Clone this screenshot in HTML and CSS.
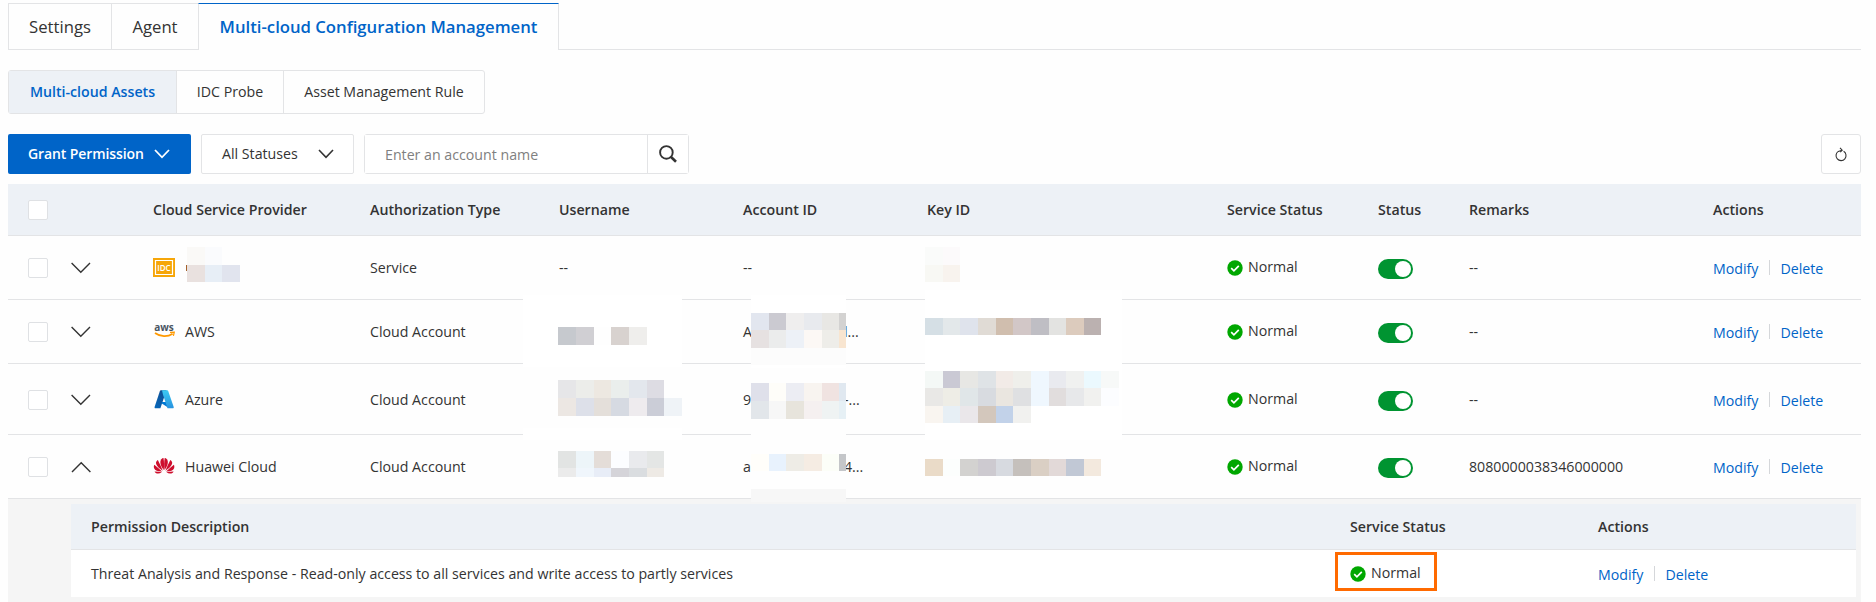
FILE: index.html
```html
<!DOCTYPE html>
<html lang="en">
<head>
    <meta charset="UTF-8">
    <title>Multi-cloud Configuration Management</title>
    <meta name="viewport" content="width=device-width, initial-scale=1">
    <link rel="stylesheet" href="styles.css">
</head>
<body>
<!-- shared icons -->
<svg class="sprite">
    <symbol id="chevron" viewBox="0 0 20 12"><path d="M.6 1l9.200 9.300L19 1" fill="none" stroke="currentColor" stroke-width="1.4"/></symbol>
    <symbol id="ok" viewBox="0 0 16 16"><circle cx="8" cy="8" r="7.7" fill="#00a700"/><path d="M4.2 8.2l2.7 2.6 4.9-4.9" fill="none" stroke="#fff" stroke-width="1.7"/></symbol>
</svg>
<div class="page">
    <div class="tabs">
        <a class="tab">Settings</a>
        <a class="tab">Agent</a>
        <a class="tab active">Multi-cloud Configuration Management</a>
        <span class="tabs-rest"></span>
    </div>

    <div class="segments">
        <a class="segment active">Multi-cloud Assets</a>
        <a class="segment">IDC Probe</a>
        <a class="segment">Asset Management Rule</a>
    </div>

    <div class="toolbar">
        <button class="btn-primary"><span>Grant Permission</span>
            <svg class="caret" viewBox="0 0 16 10"><path d="M1 1l7 7.300L15 1" fill="none" stroke="currentColor" stroke-width="1.8"/></svg>
        </button>
        <button class="select"><span>All Statuses</span>
            <svg class="caret" viewBox="0 0 16 10"><path d="M1 1l7 7.300L15 1" fill="none" stroke="currentColor" stroke-width="1.6"/></svg>
        </button>
        <div class="search">
            <input type="text" placeholder="Enter an account name">
            <button class="search-btn">
                <svg width="18" height="18" viewBox="0 0 18 18" fill="none" stroke="#333"><circle cx="7.4" cy="7.4" r="6.3" stroke-width="1.9"/><path d="M11.8 11.8l5.2 5" stroke-width="2.6"/></svg>
            </button>
        </div>
        <button class="refresh">
            <svg width="12" height="15" viewBox="0 0 12 15" fill="none" stroke="#333"><path d="M8.6 4.300A5 5 0 1 1 3.300 4.400L7 3.300" stroke-width="1.100"/><path d="M5 .8l2.200 2.400L5.200 5.200" stroke-width="1.100"/></svg>
        </button>
    </div>

    <div class="table-wrap">
        <table class="grid">
            <colgroup>
                <col class="c-check"><col class="c-arrow"><col class="c-provider"><col class="c-auth"><col class="c-user"><col class="c-account">
                <col class="c-key"><col class="c-service"><col class="c-status"><col class="c-remarks"><col class="c-actions">
            </colgroup>
            <thead>
                <tr>
                    <th><span class="check"></span></th>
                    <th></th>
                    <th>Cloud Service Provider</th>
                    <th>Authorization Type</th>
                    <th>Username</th>
                    <th>Account ID</th>
                    <th>Key ID</th>
                    <th>Service Status</th>
                    <th>Status</th>
                    <th>Remarks</th>
                    <th>Actions</th>
                </tr>
            </thead>
            <tbody>
                <tr>
                    <td><span class="check"></span></td>
                    <td><svg class="arrow"><use href="#chevron"/></svg></td>
                    <td><div class="provider">
                        <svg width="22" height="19" viewBox="0 0 22 19"><path d="M0 0h22v19H0z" fill="#f6a609"/><path d="M2.5 2.5h17v14h-17z" fill="none" stroke="#fff" stroke-width="1.2"/><text x="11" y="12.6" text-anchor="middle" class="idc">IDC</text></svg>
                    </div></td>
                    <td>Service</td>
                    <td>--</td>
                    <td>--</td>
                    <td></td>
                    <td><div class="state"><svg class="ok"><use href="#ok"/></svg>Normal</div></td>
                    <td><span class="switch"></span></td>
                    <td>--</td>
                    <td><div class="actions"><a>Modify</a><i></i><a>Delete</a></div></td>
                </tr>
                <tr>
                    <td><span class="check"></span></td>
                    <td><svg class="arrow"><use href="#chevron"/></svg></td>
                    <td><div class="provider">
                        <svg width="22" height="19" viewBox="0 0 22 19"><text x="11" y="9" text-anchor="middle" class="aws">aws</text><path d="M2 11c5.500 4 12.500 4.200 17.600.8" fill="none" stroke="#f90" stroke-width="1.700"/><path d="M17 10.300l4.300-.2-.9 3.700" fill="none" stroke="#f90" stroke-width="1.200"/></svg>
                        AWS
                    </div></td>
                    <td>Cloud Account</td>
                    <td></td>
                    <td><div class="account"><span>A</span>l...</div></td>
                    <td></td>
                    <td><div class="state"><svg class="ok"><use href="#ok"/></svg>Normal</div></td>
                    <td><span class="switch"></span></td>
                    <td>--</td>
                    <td><div class="actions"><a>Modify</a><i></i><a>Delete</a></div></td>
                </tr>
                <tr class="tall">
                    <td><span class="check"></span></td>
                    <td><svg class="arrow"><use href="#chevron"/></svg></td>
                    <td><div class="provider">
                        <svg width="22" height="19" viewBox="0 0 22 19">
                            <defs>
                                <linearGradient id="azDark" x1="1" y1="0" x2="0" y2="1"><stop offset="0" stop-color="#114a8b"/><stop offset="1" stop-color="#0669bc"/></linearGradient>
                                <linearGradient id="azLight" x1="0" y1="0" x2="0" y2="1"><stop offset="0" stop-color="#3ccbf4"/><stop offset="1" stop-color="#2892df"/></linearGradient>
                            </defs>
                            <path d="M7.800.3h5.700L7.400 18.300H2.600c-.9 0-1.200-.6-1-1.400L6.900 1c.2-.5.5-.7.9-.7z" fill="url(#azDark)"/>
                            <path d="M8.800 12h7v6l-7-4.500z" fill="#0078d4"/>
                            <path d="M9 .3h5.200c.5 0 .9.3 1 .7l5.500 15.900c.2.800-.2 1.400-1 1.400h-5.200L10 4.800z" fill="url(#azLight)"/>
                        </svg>
                        Azure
                    </div></td>
                    <td>Cloud Account</td>
                    <td></td>
                    <td><div class="account"><span>9</span>-...</div></td>
                    <td></td>
                    <td><div class="state"><svg class="ok"><use href="#ok"/></svg>Normal</div></td>
                    <td><span class="switch"></span></td>
                    <td>--</td>
                    <td><div class="actions"><a>Modify</a><i></i><a>Delete</a></div></td>
                </tr>
                <tr>
                    <td><span class="check"></span></td>
                    <td><svg class="arrow up"><use href="#chevron"/></svg></td>
                    <td><div class="provider">
                        <svg width="22" height="19" viewBox="0 0 22 19" fill="#ce0e2d">
                            <g id="petals">
                                <path d="M10.700 13C7.500 9 6.400 4.500 8.300 2.200c.6-.7 1.400-1 2.200-1.100.7 3.800.7 8 .2 11.900z"/>
                                <path d="M9.800 13.800C6 11.400 3 8.500 3 5.800c0-1.300.9-2.300 1.900-2.900C6.300 6 8.300 9.800 9.800 13.800z"/>
                                <path d="M9.100 14.600C5 14.700 2 13.500 1.100 11.300c-.5-1.300-.2-2.600.2-3.500 2.500 2 5.300 4.200 7.800 6.800z"/>
                                <path d="M8.800 15.300c-2.200 1.500-4.500 1.700-6 .6-.7-.5-1-1.100-1.200-1.500 2.300.1 4.800.400 7.200.9z"/>
                            </g>
                            <use href="#petals" transform="matrix(-1 0 0 1 22.200 0)"/>
                        </svg>
                        Huawei Cloud
                    </div></td>
                    <td>Cloud Account</td>
                    <td></td>
                    <td><div class="account"><span>a</span>4...</div></td>
                    <td></td>
                    <td><div class="state"><svg class="ok"><use href="#ok"/></svg>Normal</div></td>
                    <td><span class="switch"></span></td>
                    <td>8080000038346000000</td>
                    <td><div class="actions"><a>Modify</a><i></i><a>Delete</a></div></td>
                </tr>
                <tr class="detail">
                    <td colspan="11">
                        <table class="inner">
                            <colgroup><col><col class="i-service"><col class="i-actions"></colgroup>
                            <thead>
                                <tr>
                                    <th>Permission Description</th>
                                    <th>Service Status</th>
                                    <th>Actions</th>
                                </tr>
                            </thead>
                            <tbody>
                                <tr>
                                    <td>Threat Analysis and Response - Read-only access to all services and write access to partly services</td>
                                    <td><div class="state marked"><svg class="ok"><use href="#ok"/></svg>Normal</div></td>
                                    <td><div class="actions"><a>Modify</a><i></i><a>Delete</a></div></td>
                                </tr>
                            </tbody>
                        </table>
                    </td>
                </tr>
            </tbody>
        </table>
        <!-- masked account data -->
        <svg class="mask" id="mask" viewBox="8 184 1853 418" shape-rendering="crispEdges"></svg>
    </div>
</div>
<script>
var userX = [558, 576, 594, 611, 629, 647, 664, 682];
var acctX = [751, 769, 786, 804, 822, 839, 846];
var keyX = [925, 943, 960, 978, 996, 1013, 1031, 1049, 1066, 1084, 1101, 1119];
// [column edges, top, bottom, colours]
var strips = [
    [[523, 682], 295, 367, 'fff'],
    [[523, 682], 428, 440, 'fff'],
    [[751, 846], 295, 368, 'fff'],
    [[751, 846], 383, 489, 'fefefe'],
    [[751, 846], 489, 502, 'f7f7f7'],
    [[925, 1122], 290, 440, 'fff'],
    [[186, 188], 265, 271, 'a4622c'],
    [[187, 205, 222], 247, 265, 'faf9f7 fafbfd'],
    [[187, 205, 222, 240], 265, 282, 'e9e1df e7eef6 e1e4ee'],
    [keyX, 247, 265, 'fafbfa fcfafb'],
    [keyX, 265, 282, 'f8f8f4 f8f3ee'],
    [userX, 327, 345, 'c6c9ce d0cfd3 fefefe d8d2cf efeeec'],
    [acctX, 313, 330, 'e2e6ef cbcad1 efeeee e8eaee e8e7e4 d3d2d1'],
    [acctX, 330, 348, 'e6e1e1 ebecec edf1f7 fcf8f5 eeede9 f8e5d0'],
    [[751, 846], 348, 365, 'fcfcfc'],
    [keyX, 318, 335, 'd5dfe5 e3e8ea dfe3ec e0dbd5 d0beae d2c7c7 bfbec4 e3e3e1 dccbbd bbb1b0'],
    [userX, 380, 398, 'e6e6e8 ecedea ede8e1 eaeeec e3e7ed dddce3'],
    [userX, 398, 416, 'ece7e3 dde0e9 e4dfda d6dae2 eeebee cbcdd7 eff3f7'],
    [acctX, 383, 401, 'dfe0ea fefdf9 ecedf3 f8f4f0 f0e3e1 e0e8f0'],
    [acctX, 401, 419, 'e2e6ea f7f7f7 e7e4dc f5f0f0 eff3f3 e6f0f5'],
    [keyX, 371, 388, 'f4f8f6 cac9d4 e7e7e4 dfe3e6 f2ebe7 efefeb eff7fe e9eaef f0f1f0 ebf9fe f7f9f8'],
    [keyX, 388, 406, 'e9e8e6 eeede6 e0e6e8 d8dbe0 eae6e0 dfe0e2 eff7fe e1dddd e7e8ea f1f1ef fcfdff'],
    [keyX, 406, 423, 'f9f5f0 e7eff5 eae7ea d3c7bc c2d2e9 f1f1ef'],
    [userX, 451, 468, 'e2e4e3 edf5f9 e4ddd8 fcfdff e9eaed e4e6e5'],
    [userX, 468, 477, 'ebebeb f0f6fc e8edf7 d5d4d9 dadde0 eeeae5'],
    [acctX, 454, 471, 'fffefa e8f2fd eeece6 f5ece3 fcfef8 c4c6c9'],
    [keyX, 459, 476, 'eadbc8 fcfefd d3d2d0 cdcad0 d7dae0 c5c0bc dacfc4 e2d9d8 c1c8d5 f3e9de']
];
var rects = '';
strips.forEach(function(s) {
    s[3].split(' ').forEach(function(color, i) {
        rects += '<rect x="' + s[0][i] + '" y="' + s[1] + '" width="' + (s[0][i + 1] - s[0][i]) +
            '" height="' + (s[2] - s[1]) + '" fill="#' + color + '"/>';
    });
});
document.getElementById('mask').innerHTML = rects;
</script>
</body>
</html>
```
FILE: styles.css
```css
* { box-sizing: border-box; }
body { margin: 0; background: #fefefe; color: #333; font-family: "Open Sans", "Noto Sans", sans-serif; font-size: 14.2px; line-height: 20px; height: 602px; overflow: hidden; }
button, input { font: inherit; color: inherit; background: #fff; padding: 0; margin: 0; }
.sprite { display: none; }
.page { padding: 3px 15px 0 8px; }

/* tabs */
.tabs { display: flex; height: 47px; font-size: 16.7px; }
.tab { display: flex; align-items: center; justify-content: center; border: 1px solid #e3e4e6; border-right: 0; width: 103px; }
.tab + .tab { width: 87px; }
.tabs .tab.active { width: 361px; color: #0064c8; font-weight: 600; border: 1px solid #e3e4e6; border-top-color: #0064c8; border-bottom: 0; }
.tabs-rest { flex: 1; border-bottom: 1px solid #e3e4e6; }

.segments { display: inline-flex; margin-top: 20px; height: 44px; border: 1px solid #e3e4e6; border-radius: 3px; vertical-align: top; }
.segment { display: flex; align-items: center; justify-content: center; width: 107px; border-right: 1px solid #e3e4e6; }
.segment.active { width: 168px; background: #edf1f6; color: #0064c8; font-weight: 600; }
.segment:last-child { width: 200px; border-right: 0; }

/* toolbar */
.toolbar { display: flex; margin-top: 20px; height: 40px; }
.btn-primary { display: flex; align-items: center; justify-content: space-between; width: 183px; padding: 0 21px 0 20px; background: #0064c8; color: #fff; font-weight: 600; font-size: 14px; letter-spacing: -.1px; border: 0; border-radius: 2px; white-space: nowrap; }
.caret { width: 16px; height: 10px; }
.select { display: flex; align-items: center; justify-content: space-between; width: 153px; margin-left: 10px; padding: 0 19px 0 20px; border: 1px solid #e3e4e6; border-radius: 2px; }
.search { display: flex; width: 325px; margin-left: 10px; border: 1px solid #e3e4e6; border-radius: 3px; }
.search input { flex: 1; min-width: 0; border: 0; padding: 1px 20px 0; }
.search input::placeholder { color: #808080; }
.search-btn { display: flex; align-items: center; justify-content: center; width: 41px; border: 0; border-left: 1px solid #e3e4e6; }
.refresh { display: flex; align-items: center; justify-content: center; width: 40px; margin-left: auto; border: 1px solid #e3e4e6; border-radius: 3px; }

/* table */
.table-wrap { position: relative; margin-top: 10px; }
table { border-collapse: separate; border-spacing: 0; table-layout: fixed; width: 100%; }
th, td { padding: 0; text-align: left; vertical-align: middle; white-space: nowrap; border-bottom: 1px solid #e3e4e6; }
th { font-weight: 600; background: #edf1f6; }
.grid > thead > tr { height: 52px; }
.grid > tbody > tr { height: 64px; }
.grid > tbody > tr.tall { height: 71px; }
.grid > tbody > tr.tall > td { padding-top: 1px; }
.grid > * > tr > :first-child { padding-left: 20px; }
.c-check { width: 63px; }
.c-arrow { width: 82px; }
.c-provider { width: 217px; }
.c-auth { width: 189px; }
.c-user { width: 184px; }
.c-account { width: 184px; }
.c-key { width: 300px; }
.c-service { width: 151px; }
.c-status { width: 91px; }
.c-remarks { width: 244px; }
.c-actions { width: 148px; }

.check { display: block; width: 20px; height: 20px; border: 1px solid #dfe1e4; border-radius: 2px; background: #fff; }
.arrow { display: block; width: 20px; height: 12px; }
.arrow.up { transform: rotate(180deg); }
.provider { display: flex; align-items: center; gap: 10px; min-height: 20px; }
.idc { font-size: 8px; font-weight: 600; fill: #fff; }
.aws { font-size: 10px; font-weight: 700; fill: #4a5563; }
.account { display: flex; }
.account span { width: 101px; }
.state { display: flex; align-items: center; gap: 5px; padding-bottom: 2px; }
.ok { width: 16px; height: 16px; margin-top: 2px; }
.switch { display: block; width: 35px; height: 20px; margin-top: 3px; border-radius: 10px; background: #009431; }
.switch::after { content: ""; display: block; width: 16px; height: 16px; border-radius: 8px; background: #fff; transform: translate(17px, 2px); }
.actions { display: flex; align-items: center; padding-top: 2px; color: #0064c8; }
.actions i { width: 1px; height: 15px; margin: 0 10px 2px 11px; background: #d5d7da; }

/* expanded row */
.grid > tbody > tr.detail { height: 110px; }
.grid > tbody > tr.detail > td { padding: 5px 5px 0 63px; background: #f5f5f5; vertical-align: top; border: 0; }
.inner th { height: 46px; }
.inner td { height: 47px; background: #fff; border: 0; }
.inner tr > :first-child { padding-left: 20px; }
.i-service { width: 248px; }
.i-actions { width: 258px; }
.marked { position: relative; }
.marked::after { content: ""; position: absolute; box-sizing: border-box; left: -15px; top: -11px; width: 102px; height: 39px; border: 3px solid #ff6a00; }

.mask { position: absolute; left: 0; top: 0; width: 1853px; height: 418px; pointer-events: none; }
```
